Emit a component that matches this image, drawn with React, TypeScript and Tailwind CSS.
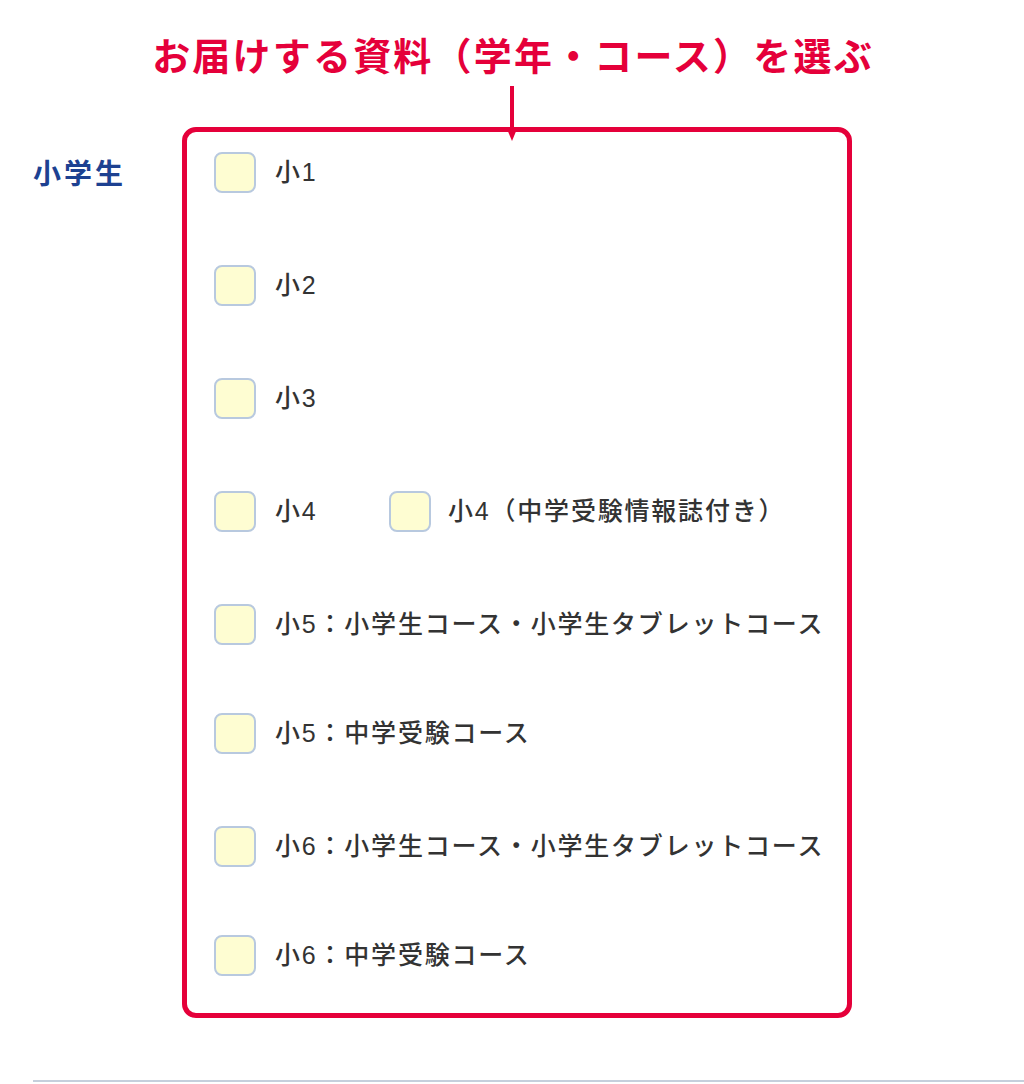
import React from "react";

const FONT = { fontFamily: '"Liberation Sans", "Noto Sans CJK JP", sans-serif' };

function Box() {
  return (
    <span className="block w-[42px] h-[41px] shrink-0 rounded-[8px] border-2 border-[#b8c9df] bg-[#fefdd2]" />
  );
}

function Item({ label, gap = "ml-[19px]" }: { label: string; gap?: string }) {
  return (
    <div className="flex items-center">
      <Box />
      <span className={`${gap} text-[25px] leading-[41px] font-medium tracking-[1.8px] text-[#333333] whitespace-nowrap`}>
        {label}
      </span>
    </div>
  );
}

export default function App() {
  const rows: { labels: string[]; mt: string }[] = [
    { labels: ["小1"], mt: "mt-0" },
    { labels: ["小2"], mt: "mt-[72px]" },
    { labels: ["小3"], mt: "mt-[72px]" },
    { labels: ["小4", "小4（中学受験情報誌付き）"], mt: "mt-[72px]" },
    { labels: ["小5：小学生コース・小学生タブレットコース"], mt: "mt-[72px]" },
    { labels: ["小5：中学受験コース"], mt: "mt-[68px]" },
    { labels: ["小6：小学生コース・小学生タブレットコース"], mt: "mt-[72px]" },
    { labels: ["小6：中学受験コース"], mt: "mt-[68px]" },
  ];
  return (
    <div className="relative w-[1024px] h-[1084px] bg-white overflow-hidden" style={FONT}>
      <h1 className="pt-[30px] pl-[2px] text-center text-[38px] leading-[54px] font-bold tracking-[2.2px] text-[#e5003a]">
        お届けする資料（学年・コース）を選ぶ
      </h1>
      <div className="flex mt-[43px]">
        <div className="w-[182px] pl-[33px] pt-[30px]">
          <span className="text-[28px] leading-[36px] font-bold tracking-[3px] text-[#1d4191]">小学生</span>
        </div>
        <div className="w-[670px] border-[5px] border-[#e5003a] rounded-[14px] pl-[27px] pt-[20px] pb-[37px]">
          {rows.map((r, i) => (
            <div key={i} className={`flex items-center ${r.mt}`}>
              {r.labels.length === 1 ? (
                <Item label={r.labels[0]} />
              ) : (
                <>
                  <div className="w-[175px]">
                    <Item label={r.labels[0]} />
                  </div>
                  <Item label={r.labels[1]} gap="ml-[17px]" />
                </>
              )}
            </div>
          ))}
        </div>
      </div>
      <div className="mt-[62px] ml-[33px] h-[2px] bg-[#c5cfdc]" />
      <svg className="absolute left-[507px] top-[86px]" width="10" height="56" viewBox="0 0 10 56">
        <rect x="3" y="0" width="4" height="46" fill="#e5003a" />
        <polygon points="0,43 10,43 5,55" fill="#e5003a" />
      </svg>
    </div>
  );
}
